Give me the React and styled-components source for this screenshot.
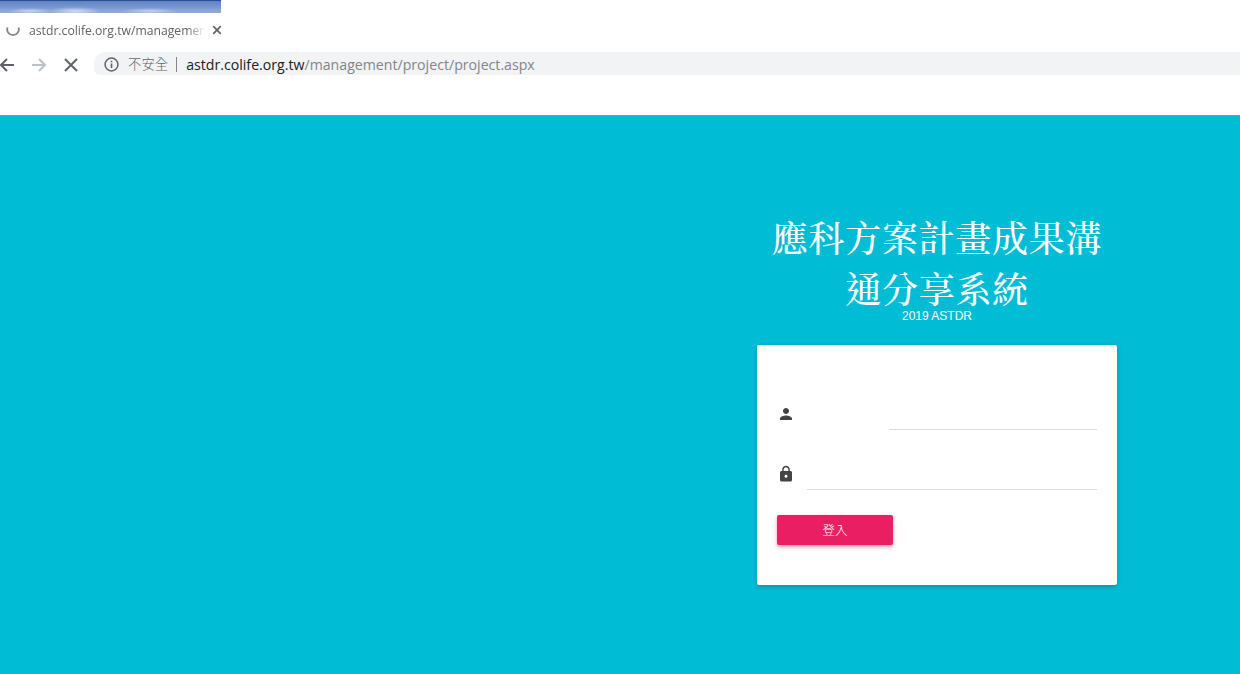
import React from "react";
import styled, { createGlobalStyle } from "styled-components";

const Global = createGlobalStyle`
  html, body { margin: 0; padding: 0; background: #fff; }
  #root { width: 1240px; height: 674px; overflow: hidden; }
`;
const Page = styled.div`
  width: 1240px; height: 674px; display: flex; flex-direction: column;
  font-family: "Open Sans", "Noto Sans CJK TC", sans-serif; background: #fff;
`;
const PhotoStrip = styled.div`
  width: 221px; height: 13px; flex: none; border-top: 1px solid #2c4f94; box-sizing: border-box;
  background:
    radial-gradient(ellipse 26px 4px at 75px 10px, rgba(225,232,245,.8), transparent),
    radial-gradient(ellipse 22px 3px at 30px 10px, rgba(215,228,245,.75), transparent),
    radial-gradient(ellipse 28px 3px at 150px 10px, rgba(215,225,245,.7), transparent),
    linear-gradient(180deg, #5f82c4 0%, #7f9bd2 60%, #97aedb 100%);
`;
const TabRow = styled.div`
  height: 26px; width: 221px; flex: none; margin-top: 4px; display: flex; align-items: center;
  padding-left: 6px; box-sizing: border-box;
`;
const Spinner = styled.svg`
  width: 14px; height: 14px; flex: none;
`;
const TabTitle = styled.span`
  margin-left: 9px; width: 176px; flex: none; overflow: hidden; white-space: nowrap; font-size: 12.2px; color: #5f6368;
  -webkit-mask-image: linear-gradient(90deg, #000 90%, transparent 100%);
  mask-image: linear-gradient(90deg, #000 90%, transparent 100%);
`;
const TabClose = styled.svg`
  width: 10px; height: 10px; margin-left: 7px; flex: none;
`;
const Toolbar = styled.div`
  height: 23px; margin-top: 9px; flex: none; display: flex; align-items: center;
`;
const NavIcon = styled.svg`
  width: 16px; height: 16px; flex: none; margin: 2px 0 0 ${(p) => p.$ml}px;
`;
const Omnibox = styled.div`
  flex: 1; margin-left: 15px; height: 23px; display: flex; align-items: center; box-sizing: border-box;
  background: #f1f3f4; border-radius: 12px 0 0 6px; padding: 2px 0 0 10px; white-space: nowrap;
`;
const InfoIcon = styled.svg`
  width: 15px; height: 15px; flex: none;
`;
const Insecure = styled.span`
  margin-left: 9px; font-size: 13.4px; color: #5f6368; font-weight: 300;
  padding-right: 8px; border-right: 1px solid #80868b; line-height: 15px;
`;
const Host = styled.span`
  margin-left: 9px; color: #202124; font-size: 14.15px;
`;
const Path = styled.span`
  color: #80868b; font-size: 14.15px;
`;
const Gap = styled.div`
  height: 40px; flex: none;
`;
const Main = styled.main`
  flex: 1; background: #00bcd4; border-top: 1px solid #4aa9b8; display: flex; justify-content: flex-end;
  padding: 95px 123px 0 0; box-sizing: border-box;
`;
const Column = styled.div`
  width: 360px; display: flex; flex-direction: column; align-items: center; color: #fff;
`;
const Title = styled.h1`
  margin: 0; width: 340px; text-align: center; font-size: 36px; letter-spacing: 0.7px; line-height: 51px;
  font-weight: 500; font-family: "Noto Serif CJK TC", "Noto Sans CJK TC", serif; color: #fff;
`;
const Sub = styled.div`
  font-family: "Liberation Sans", sans-serif; font-size: 12px; line-height: 14px; margin-top: -4px;
`;
const Card = styled.form`
  width: 360px; height: 240px; margin-top: 22px; background: #fff; border-radius: 2px; box-sizing: border-box;
  box-shadow: 0 2px 5px rgba(0,0,0,.2); padding: 0 20px; display: flex; flex-direction: column;
`;
const Field = styled.div`
  display: flex; align-items: flex-start; margin-top: ${(p) => p.$top}px; height: 30px; flex: none;
`;
const FieldIcon = styled.svg`
  width: 18px; height: 18px; flex: none; margin-top: 5px;
`;
const Line = styled.div`
  align-self: flex-end; margin-left: ${(p) => p.$ml}px; flex: 1; border-bottom: 1px solid #ddd; height: 1px;
`;
const Submit = styled.button`
  margin-top: 25px; width: 116px; height: 30px; border: 0; border-radius: 2px; background: #e91e63; color: #fff;
  font-family: "Noto Sans CJK TC", sans-serif; font-weight: 300; font-size: 12.5px; padding: 0 0 2px; flex: none;
  box-shadow: 0 2px 5px rgba(233,30,99,.35), 0 2px 2px rgba(0,0,0,.12);
`;

export default function App() {
  return (
    <Page>
      <Global />
      <PhotoStrip />
      <TabRow>
        <Spinner viewBox="0 0 14 14" fill="none">
          <path d="M1.500 4.500a5.800 5.800 0 1 0 11 0" stroke="#80868b" strokeWidth="1.800" />
        </Spinner>
        <TabTitle>astdr.colife.org.tw/managemen</TabTitle>
        <TabClose viewBox="0 0 10 10">
          <path d="M1.200 1.200l7.600 7.600M8.800 1.200L1.200 8.800" stroke="#5f6368" strokeWidth="1.700" />
        </TabClose>
      </TabRow>
      <Toolbar>
        <NavIcon $ml={-1} viewBox="0 0 16 16" fill="none">
          <path d="M15 8H2M8 2L2 8l6 6" stroke="#5f6368" strokeWidth="2" />
        </NavIcon>
        <NavIcon $ml={16} viewBox="0 0 16 16" fill="none">
          <path d="M1 8h13M8 2l6 6-6 6" stroke="#bdc1c6" strokeWidth="2" />
        </NavIcon>
        <NavIcon $ml={16} viewBox="0 0 16 16" fill="none">
          <path d="M2 2l12 12M14 2L2 14" stroke="#5f6368" strokeWidth="2" />
        </NavIcon>
        <Omnibox>
          <InfoIcon viewBox="0 0 14 14" fill="none">
            <circle cx="7" cy="7" r="6" stroke="#5f6368" strokeWidth="1.400" />
            <path d="M7 6v4.200M7 3.400v1.500" stroke="#5f6368" strokeWidth="1.500" />
          </InfoIcon>
          <Insecure>不安全</Insecure>
          <Host>astdr.colife.org.tw</Host>
          <Path>/management/project/project.aspx</Path>
        </Omnibox>
      </Toolbar>
      <Gap />
      <Main>
        <Column>
          <Title>應科方案計畫成果溝通分享系統</Title>
          <Sub>2019 ASTDR</Sub>
          <Card>
            <Field $top={55}>
              <FieldIcon viewBox="0 0 24 24">
                <path fill="#444" d="M12 12c2.200 0 4-1.800 4-4s-1.800-4-4-4-4 1.800-4 4 1.800 4 4 4zm0 2c-2.700 0-8 1.300-8 4v2h16v-2c0-2.700-5.300-4-8-4z" />
              </FieldIcon>
              <Line $ml={94} />
            </Field>
            <Field $top={30}>
              <FieldIcon viewBox="0 0 24 24">
                <path fill="#444" d="M18 8h-1V6c0-2.800-2.200-5-5-5S7 3.200 7 6v2H6c-1.100 0-2 .9-2 2v10c0 1.100.9 2 2 2h12c1.100 0 2-.9 2-2V10c0-1.100-.9-2-2-2zm-6 9c-1.100 0-2-.9-2-2s.9-2 2-2 2 .9 2 2-.9 2-2 2zm3.100-9H8.900V6c0-1.700 1.400-3.100 3.100-3.100s3.100 1.400 3.100 3.100v2z" />
              </FieldIcon>
              <Line $ml={12} />
            </Field>
            <Submit type="button">登入</Submit>
          </Card>
        </Column>
      </Main>
    </Page>
  );
}
